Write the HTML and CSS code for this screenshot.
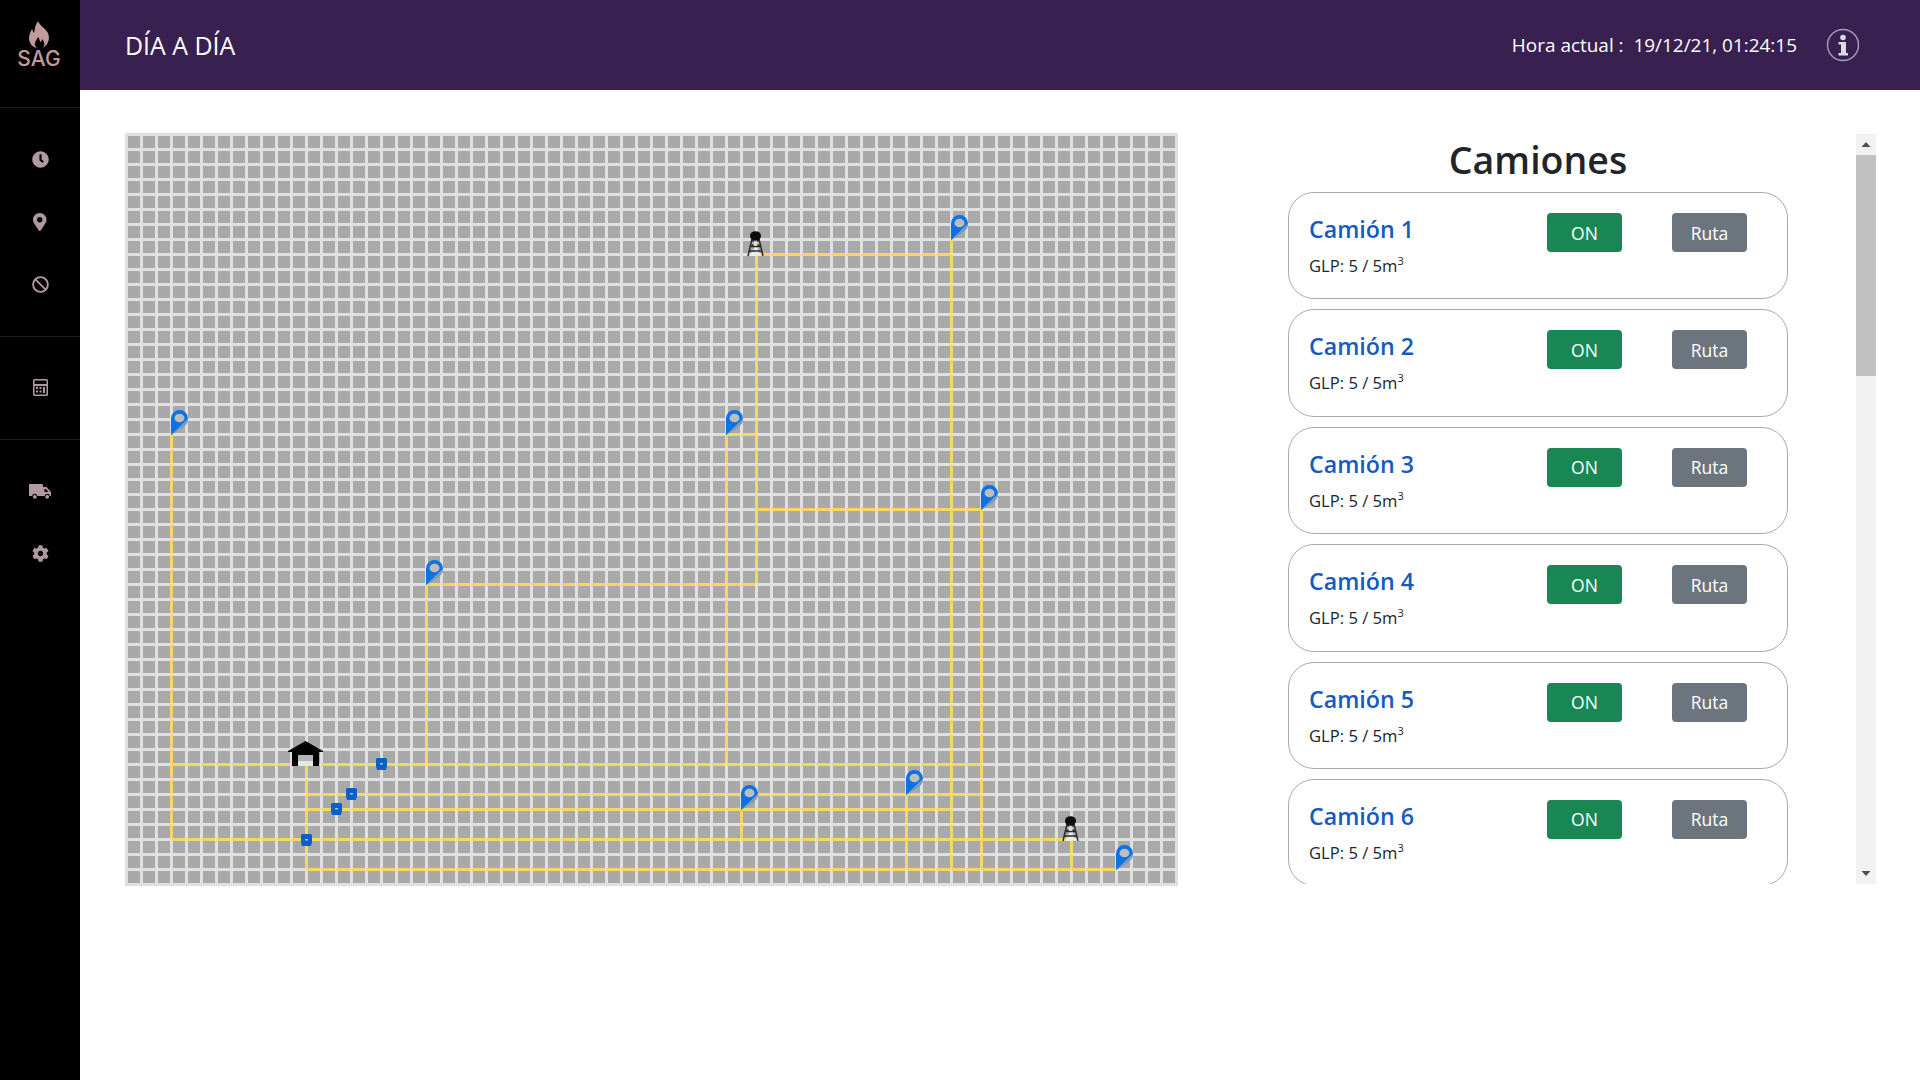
FILE: index.html
```html
<!DOCTYPE html>
<html lang="es">
<head>
<meta charset="utf-8">
<title>SAG - Día a día</title>
<link rel="stylesheet" href="styles.css">
</head>
<body>
<div class="app">
  <aside class="sidebar">
    <div class="logo">
      <svg class="flame" viewBox="0 0 22 28"><path d="M10 1C11 5 17 8 20 13C22 18 21 24 15 28C17 25 17 22 14 19C14 21 13 22 12 22C12 20 11 18 10 17C9 20 6 22 7 25C7 26 8 27 9 28C4 27 1 23 1 18C1 14 3 11 4 9C5 11 5 12 6 13C7 9 7 5 10 1Z"/></svg>
      <span class="logo-text">SAG</span>
    </div>
    <nav class="nav-group">
      <a class="nav-item"><svg class="ic-17" viewBox="0 0 512 512"><path d="M256,8C119,8,8,119,8,256S119,504,256,504,504,393,504,256,393,8,256,8Zm92.49,313h0l-20,25a16,16,0,0,1-22.49,2.5h0l-67-49.72a40,40,0,0,1-15-31.23V112a16,16,0,0,1,16-16h32a16,16,0,0,1,16,16V256l58,42.5A16,16,0,0,1,348.49,321Z"/></svg></a>
      <a class="nav-item"><svg class="ic-marker" viewBox="0 0 384 512"><path d="M172.268 501.67C26.97 291.031 0 256 0 192 0 85.961 85.961 0 192 0s192 85.961 192 192c0 64-26.97 99.031-172.268 309.67-9.535 13.774-29.93 13.773-39.464 0zM192 272c44.183 0 80-35.817 80-80s-35.817-80-80-80-80 35.817-80 80 35.817 80 80 80z"/></svg></a>
      <a class="nav-item"><svg class="ic-17" viewBox="0 0 18 18"><circle cx="9" cy="9" r="7.800" fill="none" stroke="currentColor" stroke-width="2"/><path d="M3.600 3.600l10.800 10.800" stroke="currentColor" stroke-width="2"/></svg></a>
    </nav>
    <nav class="nav-group">
      <a class="nav-item"><svg class="ic-calc" viewBox="0 0 15 17"><path fill-rule="evenodd" d="M1.500 0h12A1.500 1.500 0 0 1 15 1.500v14a1.500 1.500 0 0 1-1.500 1.500h-12A1.500 1.500 0 0 1 0 15.500v-14A1.500 1.500 0 0 1 1.500 0zM1.500 1.500V5h12V1.500zM1.500 7v8.500h12V7zM3 8h2v2H3zM6.500 8h2v2h-2zM10 8h2v6h-2zM3 11.500h2v2H3zM6.500 11.500h2v2h-2z"/></svg></a>
    </nav>
    <nav class="nav-group">
      <a class="nav-item"><svg class="ic-truck" viewBox="0 0 22 15"><path d="M1 0h12a1 1 0 0 1 1 1v2h3.500L22 8v4h-1.100a2.700 2.700 0 0 0-5.300 0H8.400a2.700 2.700 0 0 0-5.300 0H0V1a1 1 0 0 1 1-1zM15.500 5v3h4l-2.600-3z" fill-rule="evenodd"/><circle cx="5.800" cy="12.800" r="1.900"/><circle cx="18.200" cy="12.800" r="1.900"/></svg></a>
      <a class="nav-item"><svg class="ic-17" viewBox="0 0 512 512"><path d="M487.4 315.7l-42.6-24.6c4.3-23.2 4.3-47 0-70.200l42.6-24.600c4.900-2.800 7.100-8.600 5.500-14-11.100-35.600-30-67.800-54.700-94.600-3.800-4.100-10-5.100-14.800-2.300L380.800 110c-17.900-15.400-38.500-27.300-60.800-35.100V25.800c0-5.600-3.900-10.500-9.400-11.700-36.700-8.200-74.300-7.800-109.200 0-5.500 1.200-9.400 6.100-9.400 11.700V75c-22.200 7.900-42.800 19.800-60.800 35.100L88.700 85.500c-4.900-2.800-11-1.900-14.800 2.300-24.700 26.700-43.600 58.900-54.700 94.600-1.700 5.400.6 11.200 5.500 14L67.300 221c-4.300 23.200-4.300 47 0 70.200l-42.600 24.600c-4.900 2.800-7.100 8.600-5.500 14 11.100 35.600 30 67.800 54.700 94.600 3.800 4.100 10 5.100 14.800 2.300l42.600-24.600c17.900 15.400 38.500 27.300 60.800 35.100v49.200c0 5.600 3.900 10.500 9.400 11.700 36.700 8.200 74.300 7.800 109.200 0 5.500-1.200 9.400-6.100 9.400-11.700v-49.200c22.200-7.900 42.800-19.800 60.800-35.100l42.600 24.600c4.900 2.800 11 1.900 14.800-2.300 24.700-26.700 43.600-58.900 54.700-94.600 1.500-5.500-.7-11.300-5.600-14.100zM256 336c-44.100 0-80-35.900-80-80s35.900-80 80-80 80 35.900 80 80-35.900 80-80 80z"/></svg></a>
    </nav>
  </aside>
  <div class="main">
    <header class="topbar">
      <h1 class="title">DÍA A DÍA</h1>
      <div class="topbar-right">
        <span class="clock">Hora actual :&nbsp; 19/12/21, 01:24:15</span>
        <svg class="info" viewBox="0 0 34 34"><circle cx="17" cy="17" r="15.500" fill="none" stroke="#a79bb3" stroke-width="1.500"/><circle cx="17" cy="9.500" r="2.800" fill="#ddd9e2"/><path fill="#ddd9e2" d="M12.500 14h7.500v11h2v2.500h-9.500V25h2.500v-8.500h-2.500z"/></svg>
      </div>
    </header>
    <main class="content">
      <section class="map">
        <svg class="overlay" viewBox="0 0 1053 753" width="1053" height="753">
          <defs>
            <g id="pin"><path fill="#0a72e3" fill-rule="evenodd" d="M0 25V8.500a8.500 8.500 0 0 1 17 0c0 4-2 6.500-5 8.500z"/><path fill="#a9a9a9" opacity=".75" d="M0 25L12 17c3-2 5-4.500 5-8.500z"/><ellipse cx="8.500" cy="8" rx="5" ry="4.300" fill="#bdbdbd"/></g>
            <g id="tower"><path fill="#eee" opacity=".85" d="M8.500 14L3 25h11z"/><path fill="none" stroke="#2a2a2a" stroke-width="1.500" d="M5 8L1 25M12 8l4 16.800M4 15.500h9M2.600 20h11.800M5 9l8 6.500M12 9l-8 6.500"/><ellipse cx="8.500" cy="5" rx="5.500" ry="4.800" fill="#0c0c0c"/><circle cx="8.500" cy="12.500" r="2.400" fill="#ddd"/></g>
            <g id="truck"><path fill="#0a5fc4" d="M1.500 0h8A1.500 1.500 0 0 1 11 1.500V8c0 1-.5 2-1 3.500-.2.600-.6.500-1.200.5H2.200c-.6 0-1 .1-1.200-.5C.5 10 0 9 0 8V1.500A1.500 1.500 0 0 1 1.500 0z"/><rect x="4" y="5" width="3" height="1.500" fill="#9ec6ee"/></g>
          </defs>
          <g class="route">
            <path d="M631.500 121.500H826.500"/>
            <path d="M826.500 106.500V736.500"/>
            <path d="M631.500 121.500V451.500"/>
            <path d="M301.500 451.500H631.500"/>
            <path d="M301.500 451.500V631.500"/>
            <path d="M631.500 376.500H856.500"/>
            <path d="M856.500 376.500V736.500"/>
            <path d="M601.500 301.500H631.500"/>
            <path d="M601.500 301.500V631.500"/>
            <path d="M46.500 631.500H856.500"/>
            <path d="M46.500 301.500V706.500"/>
            <path d="M46.500 706.500H946.500"/>
            <path d="M946.500 706.500V736.500"/>
            <path d="M181.500 631.500V736.500"/>
            <path d="M181.500 736.500H991.500"/>
            <path d="M181.500 661.500H856.500"/>
            <path d="M181.500 676.500H826.500"/>
            <path d="M616.500 676.500V706.500"/>
            <path d="M781.500 661.500V736.500"/>
          </g>
          <use href="#pin" x="46" y="277"/>
          <use href="#pin" x="301" y="427"/>
          <use href="#pin" x="601" y="277"/>
          <use href="#pin" x="826" y="82"/>
          <use href="#pin" x="856" y="352"/>
          <use href="#pin" x="616" y="652"/>
          <use href="#pin" x="781" y="637"/>
          <use href="#pin" x="991" y="712"/>
          <use href="#tower" x="622" y="98"/>
          <use href="#tower" x="937" y="683"/>
          <use href="#truck" x="251" y="625"/>
          <use href="#truck" x="221" y="655"/>
          <use href="#truck" x="206" y="670"/>
          <use href="#truck" x="176" y="701"/>
          <rect x="173" y="622" width="15" height="6" fill="#b4b4b4"/>
          <rect x="173" y="628" width="15" height="5" fill="#e6e6e6"/>
          <path fill="#000" d="M180.500 608L163 618v1h4v14h6v-11h15v11h6v-14h4v-1z"/>
        </svg>
      </section>
      <section class="panel">
        <div class="panel-scroll">
          <h2 class="panel-title">Camiones</h2>
          <ul class="cards">
            <li class="card"><div class="card-info"><h3>Camión 1</h3><p>GLP: 5 / 5m<sup>3</sup></p></div><button class="btn on">ON</button><button class="btn route-btn">Ruta</button></li>
            <li class="card"><div class="card-info"><h3>Camión 2</h3><p>GLP: 5 / 5m<sup>3</sup></p></div><button class="btn on">ON</button><button class="btn route-btn">Ruta</button></li>
            <li class="card"><div class="card-info"><h3>Camión 3</h3><p>GLP: 5 / 5m<sup>3</sup></p></div><button class="btn on">ON</button><button class="btn route-btn">Ruta</button></li>
            <li class="card"><div class="card-info"><h3>Camión 4</h3><p>GLP: 5 / 5m<sup>3</sup></p></div><button class="btn on">ON</button><button class="btn route-btn">Ruta</button></li>
            <li class="card"><div class="card-info"><h3>Camión 5</h3><p>GLP: 5 / 5m<sup>3</sup></p></div><button class="btn on">ON</button><button class="btn route-btn">Ruta</button></li>
            <li class="card"><div class="card-info"><h3>Camión 6</h3><p>GLP: 5 / 5m<sup>3</sup></p></div><button class="btn on">ON</button><button class="btn route-btn">Ruta</button></li>
          </ul>
        </div>
        <div class="scrollbar">
          <svg class="sb-arrow" viewBox="0 0 20 21"><path d="M10 8l4.500 5h-9z"/></svg>
          <div class="sb-track"><div class="sb-thumb"></div></div>
          <svg class="sb-arrow" viewBox="0 0 20 21"><path d="M10 13L5.500 8h9z"/></svg>
        </div>
      </section>
    </main>
  </div>
</div>
</body>
</html>
```
FILE: styles.css
```css
* { box-sizing: border-box; }
html, body { margin: 0; height: 100%; overflow: hidden; background: #fff; }
body { font-family: "Open Sans", "Noto Sans", sans-serif; color: #212529; }

.app { display: flex; height: 1080px; }

.sidebar { width: 80px; flex: none; background: #000; color: #b09a9f; }
.logo { height: 107px; padding: 20px 2px 0 0; display: flex; flex-direction: column; align-items: center; color: #c29a9c; }
.flame { width: 22px; height: 28px; fill: currentColor; display: block; }
.logo-text { font-family: "Inter", sans-serif; font-weight: 500; font-size: 21px; line-height: 20px; margin-top: 1px; }
.nav-group { border-top: 1px solid #1c1c1c; padding: 20px 0; }
.nav-item { height: 62.5px; display: flex; align-items: center; justify-content: center; }
.nav-item svg { fill: currentColor; display: block; }
.ic-17 { width: 17px; height: 17px; }
.ic-marker { width: 13.5px; height: 18px; }
.ic-calc { width: 15px; height: 17px; }
.ic-truck { width: 22px; height: 15px; }

.main { flex: 1; min-width: 0; display: flex; flex-direction: column; }
.topbar { height: 90px; flex: none; background: #382150; color: #fff; display: flex; align-items: center; justify-content: space-between; padding: 0 60px 0 45px; }
.title { margin: 0; font-size: 24.900px; font-weight: 400; }
.topbar-right { display: flex; align-items: center; gap: 29px; }
.clock { font-size: 18.950px; }
.info { width: 34px; height: 34px; display: block; }

.content { display: flex; padding: 43px 44px 0 45px; gap: 42px; align-items: flex-start; }

.map {
  position: relative;
  width: 1053px;
  height: 753px;
  flex: none;
  background:
    linear-gradient(#e0e0e0 3px, transparent 3px) 0 0 / 15px 15px,
    linear-gradient(90deg, #e0e0e0 3px, transparent 3px) 0 0 / 15px 15px,
    #a9a9a9;
}
.overlay { position: absolute; left: 0; top: 0; display: block; }
.route path { fill: none; stroke: #f7d762; stroke-width: 3; stroke-dasharray: 13.500 1.500; }

.panel { flex: 1; min-width: 0; height: 750px; margin-top: 1px; display: flex; }
.panel-scroll { flex: 1; min-width: 0; overflow: hidden; }
.scrollbar { width: 20px; flex: none; display: flex; flex-direction: column; background: #f1f1f1; }
.sb-arrow { width: 20px; height: 21px; flex: none; display: block; fill: #505050; }
.sb-track { flex: 1; }
.sb-thumb { height: 221px; background: #c1c1c1; }

.panel-title { margin: 0; height: 58px; padding-top: 1px; text-align: center; font-size: 37.500px; line-height: 50px; font-weight: 600; color: #212529; }
.cards { list-style: none; margin: 0 auto; padding: 0; width: 500px; }
.card { display: flex; align-items: flex-start; height: 107.400px; margin-bottom: 10px; padding: 20px 0 0 20px; border: 1px solid #aaa; border-radius: 26px; background: #fff; }
.card-info { width: 238px; flex: none; padding-top: 1px; }
.card-info h3 { margin: 0; font-size: 23.200px; line-height: 30px; font-weight: 600; color: #155bbf; }
.card-info p { margin: 10px 0 0; font-size: 16.600px; line-height: 24px; color: #212529; }
.card-info sup { font-size: 11px; line-height: 0; vertical-align: baseline; position: relative; top: -7px; }
.btn { width: 75px; height: 39px; flex: none; border: 0; border-radius: 4px; color: #fff; font: 400 17.500px "Open Sans", "Noto Sans", sans-serif; padding: 0; }
.on { background: #198754; margin-right: 50px; }
.route-btn { background: #6c757d; }
```
